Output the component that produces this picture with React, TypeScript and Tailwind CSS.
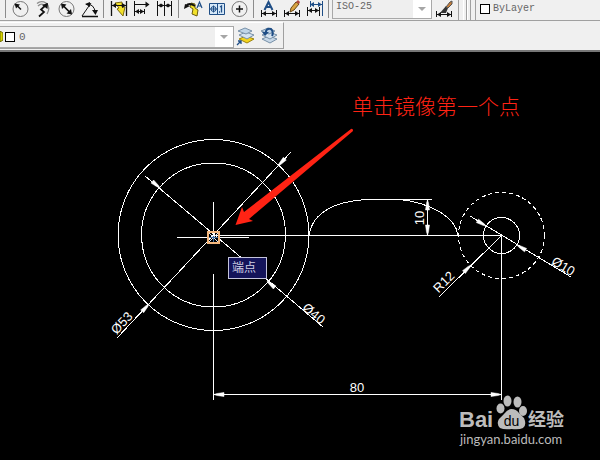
import type { ReactNode } from "react";

const B = "#111";
const STEEL = "#1f4e86";
const YEL = "#f2e12a";

function Icon({ children }: { children: ReactNode }) {
  return (
    <svg width="19" height="19" viewBox="0 0 19 19" fill="none" stroke={B} strokeWidth="1" className="block">
      {children}
    </svg>
  );
}

function Tool({ label, children }: { label: string; children: ReactNode }) {
  return (
    <button type="button" aria-label={label} title={label} className="flex h-[19px] w-[23px] shrink-0 items-center justify-center">
      <Icon>{children}</Icon>
    </button>
  );
}

function Divider() {
  return <span className="ml-0.5 mr-[3px] h-4.5 w-px shrink-0 bg-[#8c8c8c]" />;
}

function Caret() {
  return (
    <svg width="8" height="4" viewBox="0 0 8 4" className="pointer-events-none block">
      <path d="M0 0H8L4 4Z" fill="#a6a6a6" />
    </svg>
  );
}

function HDim({ y, x1 = 2, x2 = 17, color = B }: { y: number; x1?: number; x2?: number; color?: string }) {
  return (
    <g stroke={color}>
      <path d={`M${x1} ${y}H${x2}`} />
      <path d={`M${x1} ${y}l4 -2.5v5zM${x2} ${y}l-4 -2.5v5z`} fill={color} stroke="none" />
    </g>
  );
}

function StyleToolbar() {
  return (
    <div className="flex h-5 w-[459px] shrink-0 items-start border-r border-[#a0a0a0] pl-[3px]">
      <Divider />
      <Tool label="Radius">
        <circle cx="9.5" cy="9" r="7.5" stroke="#777" />
        <path d="M10 9.500L5.500 5" strokeWidth="1.500" />
        <path d="M3.500 3.500L9 4.500L5 8.500Z" fill={B} stroke="none" />
      </Tool>
      <Tool label="Jogged">
        <path d="M3 3.500Q7 0 12 3Q17 7 13 14M4 6Q7 3 10 5" stroke="#8c8c8c" strokeWidth="1.300" />
        <path d="M5 16.500L10 12L7 9.500L13 4" strokeWidth="1.700" />
        <path d="M14 3L13.500 9L8 5Z" fill={B} stroke="none" />
      </Tool>
      <Tool label="Diameter">
        <circle cx="9.5" cy="9" r="7.5" stroke="#777" />
        <path d="M5 4.500L14 13.500" strokeWidth="1.700" />
        <path d="M4 3.500L9.500 4.500L5 9ZM15 14.500L9.500 13.500L14 9Z" fill={B} stroke="none" />
      </Tool>
      <Tool label="Angular">
        <path d="M2 16.500H18" strokeWidth="1.500" />
        <path d="M2 16L11 3M6 4.500Q14 3 15.500 13" />
        <path d="M5 4L10 2V7ZM15.500 15L12 10L18 10Z" fill={B} stroke="none" />
      </Tool>
      <Divider />
      <Tool label="Quick dimension">
        <path d="M6 3L13 2L13 7L16 7L14 16L8 9L10 8Z" fill={YEL} stroke="#7d6a10" />
        <path d="M2.500 1V16M17.500 1V16" strokeWidth="1.300" />
        <HDim y={5.5} x1={3} x2={17} />
      </Tool>
      <Tool label="Baseline">
        <path d="M2.500 1V16M12.500 9V14M2 4.500H17" />
        <path d="M17.500 4.500l-4 -3v6z" fill={B} stroke="none" />
        <HDim y={11.5} x1={3} x2={12} />
      </Tool>
      <Tool label="Continue">
        <path d="M2.500 1V16M9.500 1V16M16.500 1V16M2 5.500H17" />
        <path d="M3 5.500l3 -2v4zM9 5.500l-3 -2v4zM10 5.500l3 -2v4zM16 5.500l-3 -2v4z" fill={B} stroke="none" />
      </Tool>
      <Divider />
      <Tool label="Quick leader">
        <path d="M7 3L11 4L11 8L14 10L13 16L8 14L9 9L6 7Z" fill={YEL} stroke="#6b5c10" />
        <path d="M2 6Q5 2 11 6" strokeWidth="1.700" />
        <path d="M0 9L1 4L6 6Z" fill={B} stroke="none" />
        <path d="M13 8L15.500 2L18 8M14 6H17" stroke={STEEL} strokeWidth="1.200" />
      </Tool>
      <Tool label="Tolerance">
        <path d="M2.500 3.500H17.500V14.500H2.500ZM10.500 3V15" stroke={STEEL} fill="#d6e8f8" />
        <circle cx="6.500" cy="9" r="2.500" stroke={STEEL} />
        <path d="M3 9H10M6.500 5.500V12.500" stroke={STEEL} />
        <path d="M12 12H13M13 7L14.500 6V12.500" stroke={STEEL} strokeWidth="1.300" />
      </Tool>
      <Tool label="Center mark">
        <circle cx="9.500" cy="9" r="7.500" stroke="#777" />
        <path d="M6 9H13M9.500 5.500V12.500" strokeWidth="1.500" />
      </Tool>
      <Divider />
      <Tool label="Dimension edit">
        <path d="M5.500 10L9.500 2L13.500 10M7 7H12" stroke={STEEL} strokeWidth="2" />
        <path d="M2.500 10V17M17.500 10V17" />
        <HDim y={13.5} x1={3} x2={17} />
      </Tool>
      <Tool label="Dimension text edit">
        <path d="M2.500 10V17M17.500 10V17" />
        <HDim y={13.5} x1={3} x2={17} />
        <path d="M8 12L9 8L14 2L17 4L12 10Z" fill="#d9a441" stroke="#674716" />
        <path d="M14 2L16 0L18 2L17 4Z" fill="#b2473c" stroke="none" />
      </Tool>
      <Tool label="Dimension update">
        <path d="M5.500 1V7M17.500 1V16" stroke={STEEL} />
        <HDim y={4.5} x1={5} x2={17} color={STEEL} />
        <path d="M2.500 7V16M14.500 7V16" />
        <HDim y={10.5} x1={3} x2={14} />
      </Tool>
      <Divider />
      <div className="relative flex h-[19px] w-[100px] shrink-0 items-center border-x border-b border-[#a8a8a8] bg-[#efefef]">
        <select aria-label="Dimension style" className="h-4 w-full appearance-none bg-transparent pb-1 pl-[3px] font-['Liberation_Mono',monospace] text-[10px] leading-3 text-[#666]">
          <option>ISO-25</option>
        </select>
        <span className="pointer-events-none absolute right-0 top-0 flex h-full w-[18px] items-center justify-center bg-white">
          <Caret />
        </span>
      </div>
      <Tool label="Dimension style manager">
        <path d="M2.500 11V17M17.500 11V17" />
        <HDim y={14.5} x1={3} x2={17} />
        <path d="M6 13L12 6L14 8L12 13Z" fill="#333" stroke="none" />
        <path d="M12 7L16 2L18 1V4L14 8Z" fill="#c87f3a" stroke="#555" />
      </Tool>
    </div>
  );
}

function PropertiesToolbar() {
  return (
    <div className="flex h-5 min-w-0 flex-1 items-stretch pl-1">
      <span className="w-1 border-l border-r border-l-white border-r-[#a0a0a0]" />
      <span className="mr-1 w-1 border-l border-r border-l-white border-r-[#a0a0a0]" />
      <div className="flex min-w-0 flex-1 items-center border-l border-[#a0a0a0] pb-0.5 pl-1">
        <span className="h-2.5 w-2.5 shrink-0 border border-black bg-white" />
        <select aria-label="Color" className="h-4 min-w-0 flex-1 appearance-none bg-transparent pl-[3px] font-['Liberation_Mono',monospace] text-[10px] leading-3 text-[#666]">
          <option>ByLayer</option>
        </select>
      </div>
    </div>
  );
}

function LayerStack({ accent }: { accent: boolean }) {
  return (
    <>
      <path d="M3 12L10 9L18 12L11 16Z" fill={accent ? "#f4d41c" : "#c7d8e8"} stroke={accent ? "#9b8310" : "#7790a8"} />
      <path d="M3 8L10 5L18 8L11 12Z" fill="#d5e3f0" stroke="#7790a8" />
      <path d="M2 4L9 1L16 4L10 7Z" fill="#c0d5e8" stroke="#7790a8" />
    </>
  );
}

function LayerToolbar() {
  return (
    <div className="mt-px flex h-[27px] w-[284px] items-center border-b border-r border-t border-[#a0a0a0] border-t-white pt-0.5">
      <div className="flex h-[22px] w-[234px] items-center border border-l-0 border-[#a8a8a8] bg-[#efefef]">
        <svg width="3" height="11" viewBox="0 0 3 11" className="block shrink-0">
          <path d="M0 0L3 2V9L0 11Z" fill="#d8d400" stroke="#6f6c00" />
        </svg>
        <span className="ml-0.5 h-2.5 w-2.5 shrink-0 border border-black bg-white" />
        <select aria-label="Layer" className="h-4 min-w-0 flex-1 appearance-none bg-transparent pl-1 font-['Liberation_Mono',monospace] text-[11px] leading-3 text-[#666]">
          <option>0</option>
        </select>
        <span className="pointer-events-none flex h-full w-[18px] items-center justify-center bg-white">
          <Caret />
        </span>
      </div>
      <Tool label="Make object's layer current">
        <LayerStack accent />
        <path d="M1 18L5 14M2 14H5V17" stroke={STEEL} strokeWidth="1.300" />
      </Tool>
      <Tool label="Layer previous">
        <LayerStack accent={false} />
        <path d="M7 7V4Q8 1 12 2Q15 5 13 9" stroke={STEEL} strokeWidth="2" />
        <path d="M3 5H10L6 9Z" fill={STEEL} stroke="none" />
      </Tool>
    </div>
  );
}

function Arrow({ x, y, angle }: { x: number; y: number; angle: number }) {
  return <path d="M0 0L3 -1L10 -2V2L3 1Z" fill="#fff" strokeWidth="0.500" transform={`translate(${x} ${y}) rotate(${angle})`} />;
}

function DimText({ x, y, angle = 0, children }: { x: number; y: number; angle?: number; children: string }) {
  return (
    <text transform={`translate(${x} ${y}) rotate(${angle})`} textAnchor="middle" fontSize="13" fill="#fff" stroke="none" className="font-['Liberation_Sans',sans-serif]">
      {children}
    </text>
  );
}

function Drawing() {
  return (
    <svg width="600" height="408" viewBox="0 52 600 408" fill="none" stroke="#fff" strokeWidth="1" className="block shrink-0" role="img" aria-label="CAD drawing">
      <g shapeRendering="crispEdges">
        <circle cx="213.5" cy="235" r="95.500" />
        <circle cx="213.5" cy="235" r="72" />
        <path d="M213.500 235.500H501.500" />
        <path d="M145 176L323 327M117 338L291 152" />
        <path d="M309 235Q312 218 328 209Q342 201 366 199.500H400Q423 202 440 212Q456 222 458 235" />
        <path d="M366 199.500H432M427.500 199V235" />
        <circle cx="501.5" cy="235.5" r="43" strokeDasharray="4 3" />
        <circle cx="501.5" cy="235.5" r="18" />
        <path d="M470 216L571 277M501 236L439 297" />
        <path d="M213.500 274V400M501.500 235V400M213 394.500H502" />
        <path d="M213.500 202V235M177 237.500H249" />
      </g>
      <Arrow x={160} y={188} angle={220} />
      <Arrow x={267} y={281} angle={40} />
      <Arrow x={149} y={304} angle={133} />
      <Arrow x={278} y={166} angle={-47} />
      <Arrow x={427.5} y={200} angle={90} />
      <Arrow x={427.5} y={235} angle={-90} />
      <Arrow x={486} y={226} angle={211} />
      <Arrow x={517} y={245} angle={31} />
      <Arrow x={471} y={265} angle={135} />
      <Arrow x={214} y={394.5} angle={0} />
      <Arrow x={501} y={394.5} angle={180} />
      <DimText x={125} y={326} angle={-47}>Ø53</DimText>
      <DimText x={311} y={317} angle={40}>Ø40</DimText>
      <DimText x={447} y={285} angle={-45}>R12</DimText>
      <DimText x={561} y={270} angle={31}>Ø10</DimText>
      <DimText x={424} y={218} angle={-90}>10</DimText>
      <DimText x={357} y={392}>80</DimText>

      <rect x="208" y="232" width="11" height="11" stroke="#f4b77d" strokeWidth="2" shapeRendering="crispEdges" />
      <path d="M209 233L218 242M218 233L209 242" stroke="#d8e4f0" />
      <path d="M213.500 236V242M209 237.500H218" stroke="#3c6a9c" />

      <path d="M235.500 225L242 207L244 212L351 129Q353 128 353 131L249 219L253 221Z" fill="#ff2314" stroke="none" />
      <text x="352" y="114" fontSize="21" fill="#ff2314" stroke="none" className="font-['Noto_Sans_CJK_SC',sans-serif] font-light">单击镜像第一个点</text>

      <rect x="228.500" y="257.500" width="38" height="21" fill="#14145a" stroke="#c4c4dc" />
      <text x="232" y="272" fontSize="12" fill="#d0d0e4" stroke="none" className="font-['Noto_Sans_CJK_SC',sans-serif]">端点</text>

      <g fill="#bcbcbc" stroke="none">
        <text x="459" y="427" fontSize="22" fontWeight="700" className="font-['Liberation_Sans',sans-serif]">Bai</text>
        <ellipse cx="500.500" cy="408.500" rx="4" ry="5" />
        <ellipse cx="507.500" cy="401" rx="4" ry="5.500" />
        <ellipse cx="517.500" cy="402" rx="4" ry="5.500" />
        <ellipse cx="523" cy="411" rx="4" ry="5" />
        <path d="M511.500 409Q516 409 519 413L524 418Q527 425 523 428Q519 430 511.500 429Q504 430 500 428Q496 424 499 419L504 414Q508 409 511.500 409Z" />
        <text x="511.500" y="426" textAnchor="middle" fontSize="14" fill="#000" className="font-['Liberation_Sans',sans-serif]">du</text>
        <text x="528" y="426" fontSize="18" fontWeight="700" className="font-['Noto_Sans_CJK_SC',sans-serif]">经验</text>
        <text x="460" y="444" fontSize="13" className="font-['Lato',sans-serif]">jingyan.baidu.com</text>
      </g>
    </svg>
  );
}

export default function App() {
  return (
    <div className="flex min-h-screen flex-col overflow-hidden bg-black">
      <header className="flex flex-col border-b-2 border-[#777] bg-[#f0f0f0] pb-px">
        <div className="flex border-b border-[#a0a0a0]">
          <StyleToolbar />
          <PropertiesToolbar />
        </div>
        <LayerToolbar />
      </header>
      <main className="flex-1 bg-black">
        <Drawing />
      </main>
    </div>
  );
}
